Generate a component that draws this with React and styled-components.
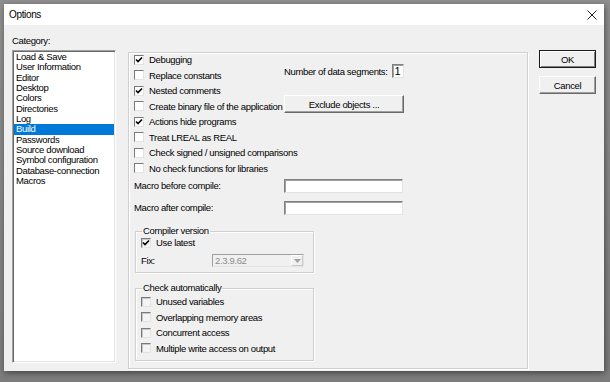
import React from 'react';
import styled, { createGlobalStyle } from 'styled-components';

const GlobalStyle = createGlobalStyle`
  html, body {
    margin: 0;
    padding: 0;
    background: #8a8a8a;
  }
  body {
    font-family: "Liberation Sans", Arial, sans-serif;
    font-size: 9.5px;
    letter-spacing: -0.35px;
    color: #000;
  }
`;

const Desktop = styled.div`
  width: 610px;
  height: 382px;
  box-sizing: border-box;
  padding: 4px 6px 11px 4px;
  background: linear-gradient(#8f8f8f, #7c7c7c);
`;

const Window = styled.div`
  width: 600px;
  height: 367px;
  background: #f0f0f0;
  display: flex;
  flex-direction: column;
  box-shadow: 1px 2px 6px rgba(0, 0, 0, 0.45);
`;

const TitleBar = styled.div`
  height: 21px;
  background: #fff;
  display: flex;
  align-items: center;
  justify-content: space-between;
  padding: 0 7px 0 5px;
  font-size: 10px;
`;

const Body = styled.div`
  display: flex;
  align-items: flex-start;
  padding: 10px 8px 0 8px;
`;

const LeftCol = styled.div`
  width: 104px;
  display: flex;
  flex-direction: column;
`;

const Label = styled.div`
  line-height: 12px;
  white-space: nowrap;
`;

const ListBox = styled.div`
  margin-top: 3px;
  height: 313px;
  box-sizing: border-box;
  background: #fff;
  border: 1px solid;
  border-color: #a0a0a0 #fff #fff #a0a0a0;
  box-shadow: inset 1px 1px #696969, inset -1px -1px #e3e3e3;
  padding: 1px 1px 0 1px;
`;

const ListItem = styled.div`
  height: 10.33px;
  line-height: 10.33px;
  padding-left: 2px;
  white-space: nowrap;
  background: ${(p) => (p.selected ? '#0078d7' : 'transparent')};
  color: ${(p) => (p.selected ? '#fff' : '#000')};
`;

const Panel = styled.div`
  margin: 17px 0 0 12px;
  width: 400px;
  height: 317px;
  box-sizing: border-box;
  border: 1px solid #cfcfcf;
  box-shadow: inset 1px 1px #fff, 1px 1px #fff;
  padding: 0 5px;
`;

const TopGrid = styled.div`
  margin-top: -1px;
  display: grid;
  grid-template-columns: 150px 120px;
  grid-auto-rows: 15.5px;
`;

const CheckRow = styled.label`
  display: flex;
  align-items: center;
  gap: 5px;
  white-space: nowrap;
  grid-column: 1;
`;

const Box = styled.span`
  width: 10px;
  height: 10px;
  box-sizing: border-box;
  flex: none;
  background: ${(p) => (p.muted ? '#f4f4f4' : '#fff')};
  border: 1px solid;
  border-color: #7a7a7a #e3e3e3 #e3e3e3 #7a7a7a;
  box-shadow: ${(p) => (p.muted ? 'inset 1px 1px #c8c8c8' : 'none')};
  display: flex;
  align-items: center;
  justify-content: center;
`;

const NumberRow = styled.div`
  grid-column: 2;
  grid-row: 1 / span 2;
  align-self: end;
  margin-bottom: 5px;
  display: flex;
  align-items: center;
  justify-content: flex-end;
  gap: 4px;
  white-space: nowrap;
`;

const Field = styled.div`
  width: ${(p) => p.w}px;
  height: 14px;
  box-sizing: border-box;
  background: #fff;
  border: 1px solid;
  border-color: #808080 #e3e3e3 #e3e3e3 #808080;
  box-shadow: inset 1px 1px #a0a0a0;
  padding-left: 2px;
  line-height: 12px;
  font-size: 11px;
`;

const Button = styled.div`
  height: ${(p) => p.h || 18}px;
  box-sizing: border-box;
  display: flex;
  align-items: center;
  justify-content: center;
  background: #f0f0f0;
  border: 1px solid;
  border-color: ${(p) => (p.primary ? '#1a1a1a' : '#fff #696969 #696969 #fff')};
  box-shadow: ${(p) =>
    p.primary
      ? 'inset 1px 1px #fff, inset -1px -1px #808080'
      : 'inset -1px -1px #a0a0a0'};
  white-space: nowrap;
`;

const ExcludeButton = styled(Button)`
  grid-column: 2;
  grid-row: 4;
  align-self: end;
  margin-bottom: 1px;
`;

const MacroGrid = styled.div`
  margin-top: 2px;
  display: grid;
  grid-template-columns: 150px 120px;
  grid-auto-rows: 15px;
  row-gap: 7px;
  align-items: center;
`;

const Group = styled.fieldset`
  width: 179px;
  box-sizing: border-box;
  margin: ${(p) => p.top}px 0 0 1px;
  padding: 0 5px ${(p) => p.bottom}px 5px;
  border: 1px solid #cfcfcf;
  box-shadow: inset 1px 1px #fff, 1px 1px #fff;
  min-width: 0;
`;

const Legend = styled.legend`
  padding: 0 1px;
  margin-left: 1px;
  line-height: 12px;
`;

const GroupRow = styled.label`
  display: flex;
  align-items: center;
  gap: 5px;
  height: ${(p) => p.h}px;
  white-space: nowrap;
`;

const FixRow = styled.div`
  display: flex;
  align-items: center;
  margin-top: 6px;
  height: 13px;
`;

const FixLabel = styled.span`
  width: 71px;
`;

const Combo = styled.div`
  width: 92px;
  height: 13px;
  box-sizing: border-box;
  display: flex;
  align-items: center;
  background: #f0f0f0;
  border: 1px solid;
  border-color: #a0a0a0 #e3e3e3 #e3e3e3 #a0a0a0;
  color: #8d8d8d;
  padding-left: 2px;
`;

const ComboText = styled.span`
  flex: 1;
`;

const ComboArrow = styled.span`
  width: 12px;
  height: 11px;
  box-sizing: border-box;
  display: flex;
  align-items: center;
  justify-content: center;
  border: 1px solid;
  border-color: #fff #c8c8c8 #c8c8c8 #fff;
`;

const RightCol = styled.div`
  margin: 15px 0 0 11px;
  width: 57px;
  display: flex;
  flex-direction: column;
  gap: 8px;
`;

const Check = () => (
  <svg width="8" height="8" viewBox="0 0 8 8">
    <polyline points="1,3.5 3,5.5 7,1.5" fill="none" stroke="#000" strokeWidth="1.6" />
  </svg>
);

const CheckBox = ({ checked, muted }) => <Box muted={muted}>{checked && <Check />}</Box>;

const categories = [
  'Load & Save',
  'User Information',
  'Editor',
  'Desktop',
  'Colors',
  'Directories',
  'Log',
  'Build',
  'Passwords',
  'Source download',
  'Symbol configuration',
  'Database-connection',
  'Macros',
];

const buildOptions = [
  ['Debugging', true],
  ['Replace constants', false],
  ['Nested comments', true],
  ['Create binary file of the application', false],
  ['Actions hide programs', true],
  ['Treat LREAL as REAL', false],
  ['Check signed / unsigned comparisons', false],
  ['No check functions for libraries', false],
];

const autoChecks = [
  'Unused variables',
  'Overlapping memory areas',
  'Concurrent access',
  'Multiple write access on output',
];

export default function App() {
  return (
    <Desktop>
      <GlobalStyle />
      <Window>
        <TitleBar>
          <span>Options</span>
          <svg width="10" height="10" viewBox="0 0 10 10">
            <path d="M0.5 0.5 L9.5 9.5 M9.5 0.5 L0.5 9.5" stroke="#222" strokeWidth="1" />
          </svg>
        </TitleBar>
        <Body>
          <LeftCol>
            <Label>Category:</Label>
            <ListBox>
              {categories.map((c) => (
                <ListItem key={c} selected={c === 'Build'}>
                  {c}
                </ListItem>
              ))}
            </ListBox>
          </LeftCol>

          <Panel>
            <TopGrid>
              {buildOptions.map(([text, on]) => (
                <CheckRow key={text}>
                  <CheckBox checked={on} />
                  {text}
                </CheckRow>
              ))}
              <NumberRow>
                <span>Number of data segments:</span>
                <Field w={16}>1</Field>
              </NumberRow>
              <ExcludeButton>Exclude objects ...</ExcludeButton>
            </TopGrid>

            <MacroGrid>
              <Label>Macro before compile:</Label>
              <Field w={119} />
              <Label>Macro after compile:</Label>
              <Field w={119} />
            </MacroGrid>

            <Group top={10} bottom={5}>
              <Legend>Compiler version</Legend>
              <GroupRow h={11}>
                <CheckBox checked muted />
                Use latest
              </GroupRow>
              <FixRow>
                <FixLabel>Fix:</FixLabel>
                <Combo>
                  <ComboText>2.3.9.62</ComboText>
                  <ComboArrow>
                    <svg width="7" height="4" viewBox="0 0 7 4">
                      <path d="M0 0 H7 L3.5 4 Z" fill="#a0a0a0" />
                    </svg>
                  </ComboArrow>
                </Combo>
              </FixRow>
            </Group>

            <Group top={9} bottom={4}>
              <Legend>Check automatically</Legend>
              {autoChecks.map((t) => (
                <GroupRow key={t} h={15.5}>
                  <CheckBox muted />
                  {t}
                </GroupRow>
              ))}
            </Group>
          </Panel>

          <RightCol>
            <Button primary>OK</Button>
            <Button>Cancel</Button>
          </RightCol>
        </Body>
      </Window>
    </Desktop>
  );
}
